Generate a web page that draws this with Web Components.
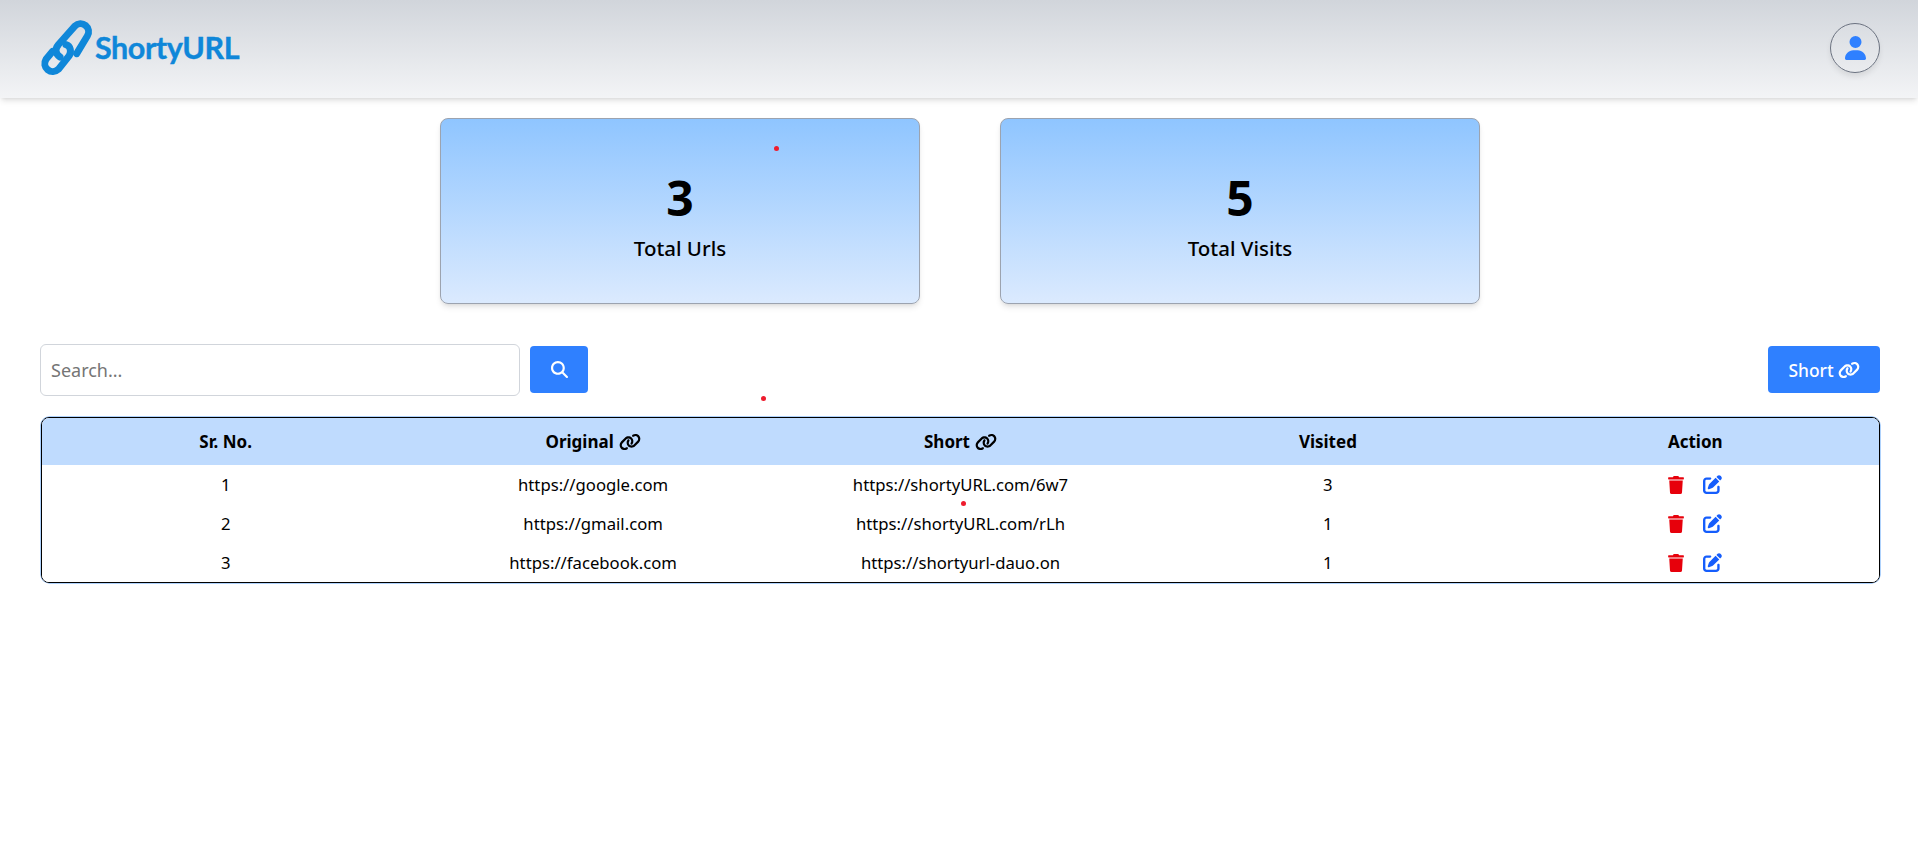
<!DOCTYPE html>
<html><head><meta charset="utf-8">
<style>
html,body{margin:0;padding:0;background:#fff;height:100%}
body{font-family:"Noto Sans","Open Sans",sans-serif;color:#000;position:relative;height:862px;overflow:hidden}
.dot{position:absolute;width:5px;height:5px;border-radius:50%;background:#ee1c2e}
</style></head><body>
<template id="i-link"><svg viewBox="0 0 640 512" fill="currentColor" width="22" height="18"><path d="M579.8 267.7c56.5-56.5 56.5-148 0-204.5c-50-50-128.8-56.5-186.3-15.4l-1.6 1.1c-14.4 10.3-17.7 30.3-7.4 44.6s30.3 17.7 44.6 7.4l1.6-1.1c32.1-22.9 76-19.3 103.8 8.6c31.5 31.5 31.5 82.5 0 114L422.3 334.8c-31.5 31.5-82.5 31.5-114 0c-27.9-27.9-31.5-71.8-8.6-103.8l1.1-1.6c10.3-14.4 6.9-34.4-7.4-44.6s-34.4-6.9-44.6 7.4l-1.1 1.6C206.5 251.2 213 330 263 380c56.5 56.5 148 56.5 204.5 0L579.8 267.7zM60.2 244.3c-56.5 56.5-56.5 148 0 204.5c50 50 128.8 56.5 186.3 15.4l1.6-1.1c14.4-10.3 17.7-30.3 7.4-44.6s-30.3-17.7-44.6-7.4l-1.6 1.1c-32.1 22.9-76 19.3-103.8-8.6C74 372 74 321 105.5 289.5L217.7 177.2c31.5-31.5 82.5-31.5 114 0c27.9 27.9 31.5 71.8 8.6 103.9l-1.1 1.6c-10.3 14.4-6.9 34.4 7.4 44.6s34.4 6.9 44.6-7.4l1.1-1.6C433.5 260.8 427 182 377 132c-56.5-56.5-148-56.5-204.5 0L60.2 244.3z"/></svg></template>

<app-header></app-header>
<stat-row>
  <stat-card value="3" label="Total Urls"></stat-card>
  <stat-card value="5" label="Total Visits"></stat-card>
</stat-row>
<tool-bar></tool-bar>
<url-table>
  <url-row n="1" orig="https://google.com" short="https://shortyURL.com/6w7" visits="3"></url-row>
  <url-row n="2" orig="https://gmail.com" short="https://shortyURL.com/rLh" visits="1"></url-row>
  <url-row n="3" orig="https://facebook.com" short="https://shortyurl-dauo.on" visits="1"></url-row>
</url-table>
<span class="dot" style="left:774px;top:146px"></span>
<span class="dot" style="left:761px;top:396px"></span>
<span class="dot" style="left:961px;top:501px"></span>

<script>
const LINK=document.getElementById('i-link').innerHTML;
function mk(el,html){el.attachShadow({mode:'open'}).innerHTML=html}
customElements.define('app-header',class extends HTMLElement{connectedCallback(){mk(this,`<style>
:host{display:flex;align-items:center;justify-content:space-between;height:98px;padding:0 38px 0 38px;box-sizing:border-box;
background:linear-gradient(#d1d5db,#f3f4f6);box-shadow:0 4px 6px -1px rgba(0,0,0,.1),0 2px 4px -2px rgba(0,0,0,.1)}
.logo{display:flex;align-items:center;color:#0f87d9;font-family:Lato,sans-serif;font-weight:700;font-size:30.5px;letter-spacing:-.45px;gap:1px}
.logo svg{width:56px;height:62px;display:block;margin-top:2px}
.logo span{transform:translateY(-2px);-webkit-text-stroke:.4px #0f87d9}
.user{width:50px;height:50px;box-sizing:border-box;border:1px solid #6b7280;border-radius:50%;display:flex;align-items:center;justify-content:center;box-shadow:0 4px 6px -1px rgba(0,0,0,.1);color:#2f80ff;margin-top:-2px}
.user svg{width:21px;height:24px}
</style>
<div class="logo"><svg viewBox="24 21 168 186"><g fill="none" stroke="#0f87d9" stroke-width="21" stroke-linecap="round"><path d="M90 135C75 125 75 110 85 98L135 42A24 24 0 0 1 172 72L140 125"/><path d="M108 98C122 102 125 120 117 132L85 172A24 24 0 0 1 48 142L68 118"/></g></svg><span>ShortyURL</span></div>
<div class="user"><svg viewBox="0 0 448 512" fill="currentColor"><path d="M224 256A128 128 0 1 0 224 0a128 128 0 1 0 0 256zm-45.7 48C79.8 304 0 383.8 0 482.3C0 498.7 13.3 512 29.7 512H418.3c16.4 0 29.7-13.3 29.7-29.7C448 383.8 368.2 304 269.7 304H178.3z"/></svg></div>`)}});
customElements.define('stat-row',class extends HTMLElement{connectedCallback(){mk(this,`<style>:host{display:flex;justify-content:center;gap:80px;padding:20px 0 0 2px}</style><slot></slot>`)}});
customElements.define('stat-card',class extends HTMLElement{connectedCallback(){mk(this,`<style>
:host{display:flex;flex-direction:column;align-items:center;box-sizing:border-box;width:480px;height:186px;border:1px solid #9ca3af;border-radius:8px;
background:linear-gradient(#8fc5ff,#dbeafe);box-shadow:0 4px 6px -1px rgba(0,0,0,.1),0 2px 4px -2px rgba(0,0,0,.1);padding-top:55px}
.v{font-size:48px;font-weight:700;line-height:48px}
.l{font-size:20.5px;font-weight:500;line-height:28px;margin-top:12px}
</style><div class="v">${this.getAttribute('value')}</div><div class="l">${this.getAttribute('label')}</div>`)}});
customElements.define('tool-bar',class extends HTMLElement{connectedCallback(){mk(this,`<style>
:host{display:flex;align-items:flex-start;padding:40px 38px 0 40px;height:52px}
input{box-sizing:border-box;width:480px;height:52px;border:1px solid #d1d5db;border-radius:6px;padding:0 10px;font:18px "Noto Sans",sans-serif;outline:none}
input::placeholder{color:#757575;opacity:1}
button{box-sizing:border-box;height:47px;margin-top:2px;border:0;border-radius:4px;background:#2f80ff;color:#fff;display:flex;align-items:center;justify-content:center;font:500 17.4px "Noto Sans",sans-serif;padding:0}
.s{width:58px;margin-left:10px}.s svg{width:17px;height:17px}
.sh{width:112px;margin-left:auto;gap:4px}
</style><input placeholder="Search..."><button class="s" aria-label="search"><svg viewBox="0 0 512 512" fill="currentColor"><path d="M416 208c0 45.9-14.9 88.3-40 122.7L502.6 457.4c12.5 12.5 12.5 32.8 0 45.3s-32.8 12.5-45.3 0L330.7 376c-34.4 25.2-76.8 40-122.7 40C93.1 416 0 322.9 0 208S93.1 0 208 0S416 93.1 416 208zM208 352a144 144 0 1 0 0-288 144 144 0 1 0 0 288z"/></svg></button><button class="sh">Short ${LINK}</button>`)}});
customElements.define('url-table',class extends HTMLElement{connectedCallback(){mk(this,`<style>
:host{display:block;box-sizing:border-box;margin:21px 38px 0 41px;border:1px solid #000;border-radius:8px;overflow:hidden;box-shadow:0 0 0 .5px #60a5fa}
.h{display:grid;grid-template-columns:repeat(5,1fr);height:47px;align-items:center;background:#bfdbfe;font-weight:700;font-size:17px;text-align:center}
.h div{display:flex;justify-content:center;align-items:center;gap:5px}
</style><div class="h"><div>Sr. No.</div><div>Original ${LINK}</div><div>Short ${LINK}</div><div>Visited</div><div>Action</div></div><slot></slot>`)}});
customElements.define('url-row',class extends HTMLElement{connectedCallback(){const a=n=>this.getAttribute(n);mk(this,`<style>
:host{display:grid;grid-template-columns:repeat(5,1fr);height:39px;align-items:center;text-align:center;font-size:16.7px;background:#fff}
.a{display:flex;justify-content:center;gap:19px;align-items:center}
.t{width:16px;height:18px;color:#e7000b}.e{width:19px;height:19px;color:#155dfc}
svg{display:block}
</style><div>${a('n')}</div><div>${a('orig')}</div><div>${a('short')}</div><div>${a('visits')}</div>
<div class="a"><svg class="t" viewBox="0 0 448 512" fill="currentColor"><path d="M432 32H312l-9.4-18.7A24 24 0 0 0 281.1 0H166.8a23.72 23.72 0 0 0-21.4 13.3L136 32H16A16 16 0 0 0 0 48v32a16 16 0 0 0 16 16h416a16 16 0 0 0 16-16V48a16 16 0 0 0-16-16zM53.2 467a48 48 0 0 0 47.9 45h245.8a48 48 0 0 0 47.9-45L416 128H32z"/></svg><svg class="e" viewBox="0 0 512 512" fill="currentColor"><path d="M471.6 21.7c-21.9-21.9-57.3-21.9-79.2 0L362.3 51.7l97.9 97.9 30.1-30.1c21.9-21.9 21.9-57.3 0-79.2L471.6 21.7zm-299.2 220c-6.1 6.1-10.8 13.6-13.5 21.9l-29.6 88.8c-2.9 8.6-.6 18.1 5.8 24.6s15.9 8.7 24.6 5.8l88.8-29.6c8.2-2.7 15.7-7.4 21.9-13.5L437.7 172.3 339.7 74.3 172.4 241.7zM96 64C43 64 0 107 0 160V416c0 53 43 96 96 96H352c53 0 96-43 96-96V320c0-17.7-14.3-32-32-32s-32 14.3-32 32v96c0 17.7-14.3 32-32 32H96c-17.7 0-32-14.3-32-32V160c0-17.7 14.3-32 32-32h96c17.7 0 32-14.3 32-32s-14.3-32-32-32H96z"/></svg></div>`)}});
</script>
</body></html>
